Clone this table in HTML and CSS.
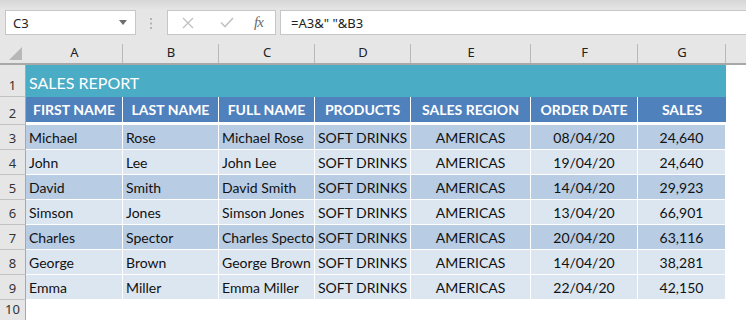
FILE: index.html
```
<!DOCTYPE html>
<html>
<head>
<meta charset="utf-8">
<link rel="stylesheet" href="styles.css">
</head>
<body>
<div class="app">
  <div class="formula-bar">
    <div class="namebox">
      <span class="ref">C3</span>
      <svg class="caret" width="8" height="5" viewBox="0 0 8 5"><path d="M0 0h8L4 5z" fill="#6d6d6d"/></svg>
    </div>
    <div class="grip">
      <svg width="3" height="11" viewBox="0 0 3 11"><rect x="0" y="0" width="2" height="2" fill="#b3b3b3"/><rect x="0" y="4.5" width="2" height="2" fill="#b3b3b3"/><rect x="0" y="9" width="2" height="2" fill="#b3b3b3"/></svg>
    </div>
    <div class="fxbox">
      <svg class="ico cancel" width="12" height="12" viewBox="0 0 12 12"><path d="M1 1L11 11M11 1L1 11" stroke="#c2c2c2" stroke-width="1.4" fill="none"/></svg>
      <svg class="ico enter" width="14" height="11" viewBox="0 0 14 11"><path d="M1 5.5L5 9.5L13 1" stroke="#c2c2c2" stroke-width="1.6" fill="none"/></svg>
      <span class="fx">fx</span>
    </div>
    <div class="formula">=A3&amp;" "&amp;B3</div>
  </div>

  <div class="sheet">
    <div class="corner"><svg width="13" height="13" viewBox="0 0 13 13"><path d="M13 0V13H0z" fill="#b7b7b7"/></svg></div>
    <div class="colhead">A</div>
    <div class="colhead">B</div>
    <div class="colhead">C</div>
    <div class="colhead">D</div>
    <div class="colhead">E</div>
    <div class="colhead">F</div>
    <div class="colhead">G</div>
    <div class="colhead rest"></div>

    <div class="rowhead">1</div>
    <div class="title">SALES REPORT</div>
    <div class="blank"></div>

    <div class="rowhead">2</div>
    <div class="th">FIRST NAME</div>
    <div class="th">LAST NAME</div>
    <div class="th">FULL NAME</div>
    <div class="th">PRODUCTS</div>
    <div class="th">SALES REGION</div>
    <div class="th">ORDER DATE</div>
    <div class="th last">SALES</div>
    <div class="blank"></div>

    <div class="rowhead">3</div>
    <div class="td dark">Michael</div><div class="td dark">Rose</div><div class="td dark">Michael Rose</div><div class="td dark c">SOFT DRINKS</div><div class="td dark c">AMERICAS</div><div class="td dark c">08/04/20</div><div class="td dark c">24,640</div>
    <div class="blank"></div>

    <div class="rowhead">4</div>
    <div class="td light">John</div><div class="td light">Lee</div><div class="td light">John Lee</div><div class="td light c">SOFT DRINKS</div><div class="td light c">AMERICAS</div><div class="td light c">19/04/20</div><div class="td light c">24,640</div>
    <div class="blank"></div>

    <div class="rowhead">5</div>
    <div class="td dark">David</div><div class="td dark">Smith</div><div class="td dark">David Smith</div><div class="td dark c">SOFT DRINKS</div><div class="td dark c">AMERICAS</div><div class="td dark c">14/04/20</div><div class="td dark c">29,923</div>
    <div class="blank"></div>

    <div class="rowhead">6</div>
    <div class="td light">Simson</div><div class="td light">Jones</div><div class="td light">Simson Jones</div><div class="td light c">SOFT DRINKS</div><div class="td light c">AMERICAS</div><div class="td light c">13/04/20</div><div class="td light c">66,901</div>
    <div class="blank"></div>

    <div class="rowhead">7</div>
    <div class="td dark">Charles</div><div class="td dark">Spector</div><div class="td dark">Charles Spector</div><div class="td dark c">SOFT DRINKS</div><div class="td dark c">AMERICAS</div><div class="td dark c">20/04/20</div><div class="td dark c">63,116</div>
    <div class="blank"></div>

    <div class="rowhead">8</div>
    <div class="td light">George</div><div class="td light">Brown</div><div class="td light">George Brown</div><div class="td light c">SOFT DRINKS</div><div class="td light c">AMERICAS</div><div class="td light c">14/04/20</div><div class="td light c">38,281</div>
    <div class="blank"></div>

    <div class="rowhead">9</div>
    <div class="td light">Emma</div><div class="td light">Miller</div><div class="td light">Emma Miller</div><div class="td light c">SOFT DRINKS</div><div class="td light c">AMERICAS</div><div class="td light c">22/04/20</div><div class="td light c">42,150</div>
    <div class="blank"></div>

    <div class="rowhead last">10</div>
    <div class="empty-row"></div>
  </div>
</div>
</body>
</html>
```
FILE: styles.css
```
* { box-sizing: border-box; }
html, body { margin: 0; padding: 0; background: #fff; }
body { width: 746px; height: 320px; overflow: hidden; }

.app { width: 746px; }

.formula-bar {
  height: 35px;
  display: flex;
  align-items: flex-start;
  padding-top: 10px;
  padding-left: 5px;
  background: linear-gradient(#d6d6d6 0px, #e3e3e3 8px, #e6e6e6 10px);
  font-family: "Noto Sans", "Open Sans", sans-serif;
}
.namebox {
  width: 131px;
  height: 25px;
  background: #fff;
  border: 1px solid #c6c6c6;
  display: flex;
  align-items: center;
  justify-content: space-between;
  padding: 0 8px 0 7px;
  font-size: 13px;
  color: #222;
}
.grip {
  width: 31px;
  height: 25px;
  display: flex;
  align-items: center;
  justify-content: center;
  padding-top: 1px;
}
.fxbox {
  width: 109px;
  height: 25px;
  background: #fff;
  border: 1px solid #c6c6c6;
  display: flex;
  align-items: center;
  padding-left: 14px;
}
.ico.enter { margin-left: 26px; }
.fx {
  margin-left: 20px;
  font-family: "Liberation Serif", "DejaVu Serif", serif;
  font-style: italic;
  font-size: 15px;
  color: #6b6b6b;
  letter-spacing: -1px;
}
.formula {
  flex: 1;
  margin-left: 4px;
  height: 25px;
  background: #fff;
  border: 1px solid #c6c6c6;
  border-right: none;
  display: flex;
  align-items: center;
  padding-left: 10px;
  font-size: 13px;
  color: #222;
}

.sheet {
  display: grid;
  grid-template-columns: 26px 97px 96px 96px 96px 120px 107px 88px 20px;
  grid-template-rows: 30px 32px 28px repeat(7, 25px) 20px;
  font-family: Lato, "Noto Sans", sans-serif;
}

.corner {
  background: #e6e6e6;
  border-bottom: 2px solid #a8a8a8;
  display: flex;
  align-items: flex-end;
  justify-content: flex-end;
  padding: 0 4px 3px 0;
}

.colhead {
  background-color: #e6e6e6;
  background-image: linear-gradient(#b9b9b9, #b9b9b9);
  background-repeat: no-repeat;
  background-position: right bottom;
  background-size: 1px 19px;
  border-bottom: 2px solid #a8a8a8;
  display: flex;
  align-items: flex-end;
  justify-content: center;
  padding-bottom: 2px;
  font-family: "Noto Sans", "Open Sans", sans-serif;
  font-size: 13px;
  color: #222;
}
.colhead.rest { background-image: none; }

.rowhead {
  background: #e6e6e6;
  border-right: 1px solid #a8a8a8;
  border-bottom: 1px solid #c2c2c2;
  display: flex;
  align-items: flex-end;
  justify-content: center;
  padding-bottom: 2px;
  font-family: "Noto Sans", "Open Sans", sans-serif;
  font-size: 13px;
  color: #333;
}
.rowhead.last { border-bottom: none; }

.title {
  grid-column: 2 / 9;
  background: #4bacc6;
  color: #fff;
  font-size: 16px;
  display: flex;
  align-items: center;
  padding: 2px 0 0 3px;
}

.th {
  background: #4f81bd;
  color: #fff;
  font-weight: bold;
  font-size: 14px;
  border-right: 1px solid #fff;
  border-bottom: 3px solid #fff;
  display: flex;
  align-items: center;
  justify-content: center;
  white-space: nowrap;
  overflow: hidden;
}
.th.last { border-right: none; }

.td {
  font-size: 14px;
  color: #111;
  border-right: 1px solid #fff;
  border-bottom: 1px solid #fff;
  display: flex;
  align-items: center;
  padding-left: 3px;
  padding-top: 1px;
  white-space: nowrap;
  overflow: hidden;
}
.td.c { justify-content: center; padding-left: 0; }
.td.dark { background: #b8cce4; }
.td.light { background: #dce6f1; }

.blank { background: #fff; }
.empty-row { grid-column: 2 / 10; background: #fff; }
```
